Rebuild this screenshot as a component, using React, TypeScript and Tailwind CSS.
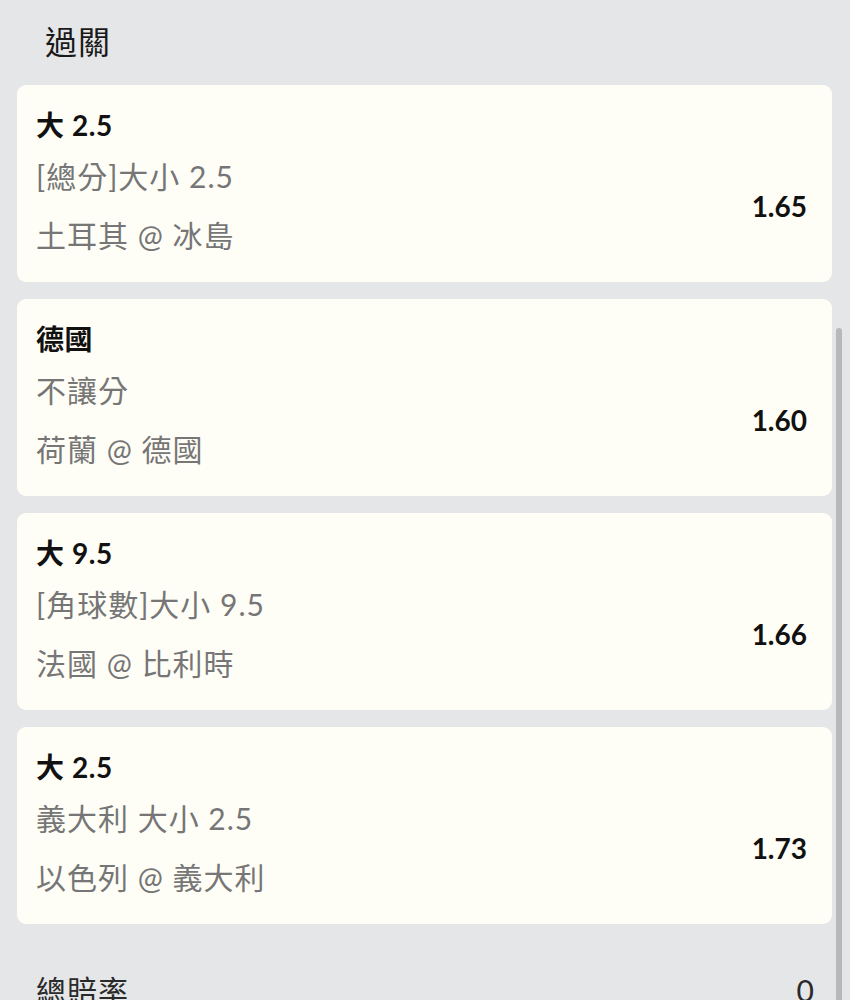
import React from "react";

const font = { fontFamily: 'Lato, "Noto Sans CJK TC", sans-serif' };

type Bet = { title: string; market: string; match: string; odds: string };

const bets: Bet[] = [
  { title: "大 2.5", market: "[總分]大小 2.5", match: "土耳其 @ 冰島", odds: "1.65" },
  { title: "德國", market: "不讓分", match: "荷蘭 @ 德國", odds: "1.60" },
  { title: "大 9.5", market: "[角球數]大小 9.5", match: "法國 @ 比利時", odds: "1.66" },
  { title: "大 2.5", market: "義大利 大小 2.5", match: "以色列 @ 義大利", odds: "1.73" },
];

export default function App() {
  return (
    <div
      className="relative h-[1000px] w-[850px] overflow-hidden bg-[#e5e6e8]"
      style={font}
    >
      <div className="h-[85px] pl-[45px] pt-[20px] text-[32px] leading-[44px] tracking-[1px] text-[#1a1a1a]">
        過關
      </div>
      <div className="flex flex-col gap-[17px] pl-[17px] pr-[18px]">
        {bets.map((b, i) => (
          <div
            key={i}
            className="h-[197px] rounded-[9px] bg-[#fffef6] pl-[19px] pr-[25px] pt-[22px]"
          >
            <div className="text-[28px] font-bold leading-[36px] tracking-[0.6px] text-[#111111]">
              {b.title}
            </div>
            <div className="mt-[13px] flex items-center justify-between">
              <div className="flex flex-col gap-[19px] text-[30px] leading-[40px] tracking-[1px] text-[#767676]">
                <div>{b.market}</div>
                <div>{b.match}</div>
              </div>
              <div className="text-[28px] font-bold leading-[36px] text-[#111111]">
                {b.odds}
              </div>
            </div>
          </div>
        ))}
      </div>
      <div className="mt-[46px] flex items-center justify-between pl-[36px] pr-[35px] text-[30px] leading-[40px] tracking-[1px] text-[#2a2a2a]">
        <div>總賠率</div>
        <div>0</div>
      </div>
      <div className="absolute left-[836px] top-[328px] h-[700px] w-[6px] rounded-full bg-[#b8b8b8]" />
    </div>
  );
}
